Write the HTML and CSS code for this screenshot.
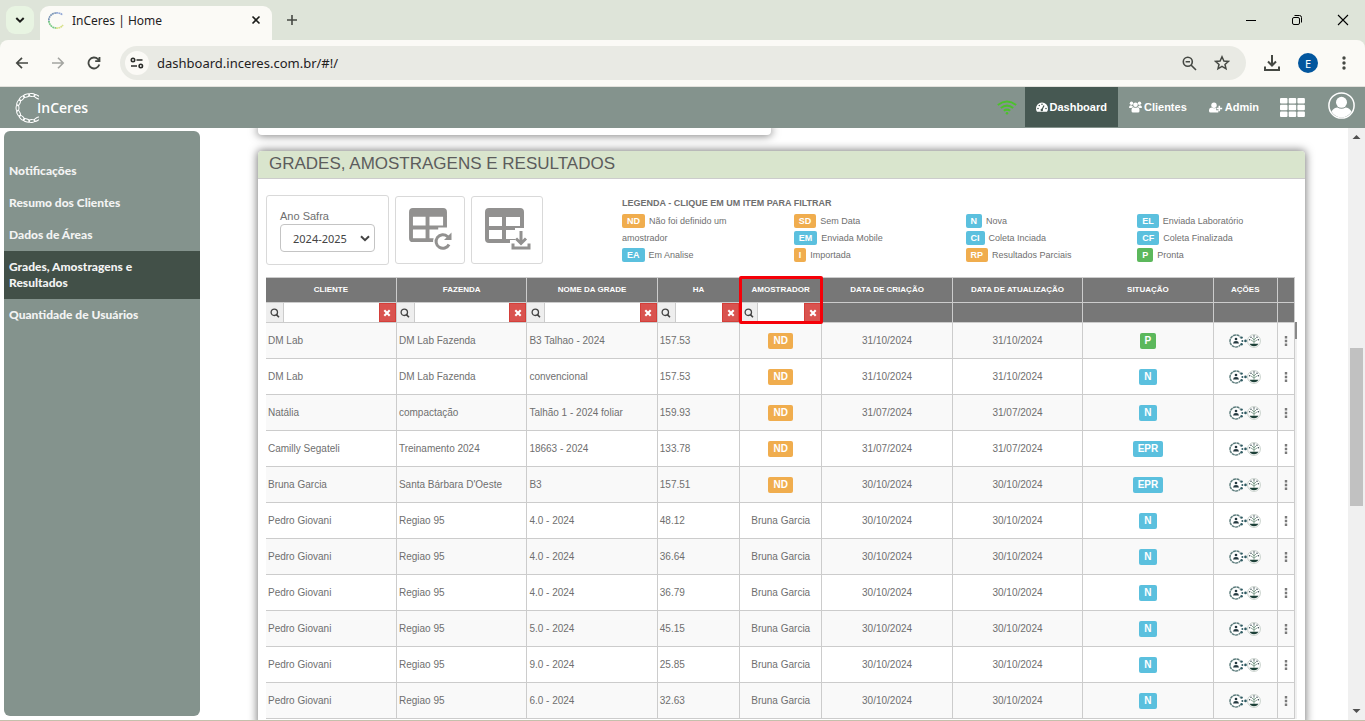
FILE: index.html
```html
<!DOCTYPE html>
<html lang="pt-BR">
<head>
<meta charset="utf-8">
<title>InCeres | Home</title>
<link rel="stylesheet" href="styles.css">
</head>
<body>
<svg class="sprite" aria-hidden="true">
  <symbol id="search" viewBox="0 0 10 10"><circle cx="4.3" cy="4.3" r="3.2" fill="none" stroke="currentColor" stroke-width="1.3"/><path d="M6.4 6.6L9 9.2" stroke="currentColor" stroke-width="1.6"/></symbol>
  <symbol id="clear" viewBox="0 0 8 8"><path d="M1.3 1.3L6.7 6.7M6.7 1.3L1.3 6.7" stroke="currentColor" stroke-width="2.1"/></symbol>
  <symbol id="share" viewBox="0 0 18 14"><circle cx="7" cy="7" r="6" fill="#fff" stroke="#5b7b7b" stroke-width="1.5" stroke-dasharray="3 .5"/><circle cx="7" cy="5" r="1.3" fill="#24383f"/><path d="M4 9.400Q4.300 7 7 7T10 9.400Z" fill="#24383f"/><path d="M11.500 1.200L17.800 7L11.500 12.800Z" fill="#fff"/><g fill="#2f5a62"><circle cx="12.600" cy="3.600" r="1.200"/><circle cx="12.600" cy="10.300" r="1.200"/><circle cx="13.400" cy="6.900" r="1"/><circle cx="16.500" cy="6.900" r="1.300"/></g></symbol>
  <symbol id="plant" viewBox="0 0 14 14"><circle cx="7" cy="7" r="6.400" fill="#fff" stroke="#b9c4bd" stroke-width=".8"/><path d="M2.500 9.800H11.500L10 11.600Q7 13 4 11.600Z" fill="#1d4038"/><path d="M7 10V3M7 8L4 6M7 8L10 6M7 6L5 4M7 6L9 4" stroke="#7f9d8c" stroke-width=".9" fill="none"/><g fill="#24383f"><circle cx="4" cy="3.200" r=".7"/><circle cx="7" cy="2" r=".7"/><circle cx="10" cy="3.200" r=".7"/><circle cx="2.700" cy="5.800" r=".7"/><circle cx="11.300" cy="5.800" r=".7"/></g></symbol>
  <symbol id="dots" viewBox="0 0 4 10"><path d="M.8 0h2.400v2.400H.8zM.8 3.800h2.400v2.400H.8zM.8 7.600h2.400V10H.8z" fill="#7a7a7a"/></symbol>
  <symbol id="grid-table" viewBox="0 0 40 36"><path fill="#929190" fill-rule="evenodd" d="M4 0H35a4 4 0 0 1 4 4V20H30V35H4a4 4 0 0 1-4-4V4a4 4 0 0 1 4-4ZM4 9V18H17V9ZM21 9V18H35V9ZM4 22V31H17V22ZM21 22V31H30V22Z"/></symbol>
  <symbol id="bead" viewBox="0 0 31 32"><ellipse cx="15.500" cy="3" rx="2.700" ry="1.600" transform="rotate(-14 15.500 3)"/></symbol>
</svg>

<div class="tabstrip">
  <button class="tab-search" aria-label="Pesquisar guias"><svg width="10" height="8" viewBox="0 0 10 8"><path d="M1.3 2L5 5.6L8.7 2" fill="none" stroke="#1b1d1a" stroke-width="2"/></svg></button>
  <div class="tab">
    <svg width="17" height="17" viewBox="0 0 17 17" fill="none" stroke-width="1.7" stroke-dasharray="1.8 .5"><path d="M8 1Q12 .5 14.5 3" stroke="#8fa5d6"/><path d="M8 1A7.3 7.3 0 0 0 1 10" stroke="#7893b5"/><path d="M1 9A7.3 7.3 0 0 0 8 16" stroke="#77c985"/><path d="M8 16Q12.500 16.500 15 13" stroke="#d5df83"/></svg>
    <span>InCeres | Home</span>
    <button class="plain" aria-label="Fechar guia"><svg width="10" height="10" viewBox="0 0 10 10"><path d="M1.5 1.500L8.500 8.500M8.500 1.500L1.500 8.500" stroke="#1b1d1a" stroke-width="1.600"/></svg></button>
  </div>
  <button class="plain new-tab" aria-label="Nova guia"><svg width="12" height="12" viewBox="0 0 12 12"><path d="M6 1V11M1 6H11" stroke="#454843" stroke-width="1.6"/></svg></button>
  <div class="window-buttons">
    <button class="plain" aria-label="Minimizar"><svg width="12" height="12" viewBox="0 0 12 12"><path d="M1 6.500H11" stroke="#000"/></svg></button>
    <button class="plain" aria-label="Restaurar"><svg width="12" height="12" viewBox="0 0 12 12" fill="none" stroke="#000"><rect x="1.500" y="3.500" width="7" height="7" rx="1.500"/><path d="M3.500 1.500H8.500a2 2 0 0 1 2 2V8.500"/></svg></button>
    <button class="plain" aria-label="Fechar"><svg width="12" height="12" viewBox="0 0 12 12"><path d="M1 1L11 11M11 1L1 11" stroke="#000" stroke-width="1.100"/></svg></button>
  </div>
</div>

<div class="toolbar">
  <div class="history">
    <button class="plain" aria-label="Voltar"><svg width="14" height="14" viewBox="0 0 14 14" fill="none" stroke="#454843" stroke-width="1.700"><path d="M13 7H2M7 1.800L1.800 7L7 12.200"/></svg></button>
    <button class="plain" aria-label="Avançar"><svg width="14" height="14" viewBox="0 0 14 14" fill="none" stroke="#a4a5a1" stroke-width="1.600"><path d="M1 7H12M7 1.800L12.200 7L7 12.200"/></svg></button>
    <button class="plain" aria-label="Recarregar"><svg width="14" height="14" viewBox="0 0 14 14" fill="none" stroke="#454843" stroke-width="1.800"><path d="M12.300 8.500A5.500 5.500 0 1 1 11 3.200L12.500 5M12.500 1V5.200H8.200"/></svg></button>
  </div>
  <div class="omnibox">
    <button class="site-info" aria-label="Informações do site"><svg width="14" height="14" viewBox="0 0 14 14" fill="none" stroke="#2b2d2a" stroke-width="1.600"><circle cx="3" cy="4" r="1.700"/><path d="M6.500 4H12.500M1 10H7"/><circle cx="10.800" cy="10" r="1.700"/></svg></button>
    <input class="address" type="text" aria-label="Endereço" value="dashboard.inceres.com.br/#!/">
    <button class="plain" aria-label="Zoom"><svg width="15" height="15" viewBox="0 0 15 15" fill="none" stroke="#454843" stroke-width="1.600"><circle cx="5.800" cy="5.800" r="4.500"/><path d="M9 9L14 14M3.600 5.800H8"/></svg></button>
    <button class="plain" aria-label="Favoritar"><svg width="16" height="16" viewBox="0 0 16 16" fill="none" stroke="#454843" stroke-width="1.500"><path d="M8 1.800L9.900 6L14.400 6.400L11 9.400L12 13.800L8 11.400L4 13.800L5 9.400L1.600 6.400L6.100 6Z"/></svg></button>
  </div>
  <div class="browser-actions">
    <button class="plain" aria-label="Downloads"><svg width="16" height="16" viewBox="0 0 16 16" fill="none" stroke="#454843" stroke-width="2"><path d="M8 0V10M4 6.500L8 10.500L12 6.500M1 11.500V15H15V11.500"/></svg></button>
    <button class="profile">E</button>
    <button class="plain" aria-label="Menu"><svg width="4" height="14" viewBox="0 0 4 14" fill="#454843"><circle cx="2" cy="2" r="1.700"/><circle cx="2" cy="7" r="1.700"/><circle cx="2" cy="12" r="1.700"/></svg></button>
  </div>
</div>

<header class="app-header">
  <a class="logo" href="#">
    <svg width="24" height="32" viewBox="0 0 24 32" fill="none" stroke="#fff" stroke-width="1">
      <g id="beads">
        <ellipse cx="15.500" cy="3" rx="3.200" ry="1.500" transform="rotate(30 15.500 16)"/>
        <ellipse cx="15.500" cy="3" rx="3.200" ry="1.500" transform="rotate(6 15.500 16)"/>
        <ellipse cx="15.500" cy="3" rx="3.200" ry="1.500" transform="rotate(-18 15.500 16)"/>
        <ellipse cx="15.500" cy="3" rx="3.200" ry="1.500" transform="rotate(-42 15.500 16)"/>
        <ellipse cx="15.500" cy="3" rx="3.200" ry="1.500" transform="rotate(-66 15.500 16)"/>
        <ellipse cx="15.500" cy="3" rx="3.200" ry="1.500" transform="rotate(-90 15.500 16)"/>
        <ellipse cx="15.500" cy="3" rx="3.200" ry="1.500" transform="rotate(-114 15.500 16)"/>
        <ellipse cx="15.500" cy="3" rx="3.200" ry="1.500" transform="rotate(-138 15.500 16)"/>
        <ellipse cx="15.500" cy="3" rx="3.200" ry="1.500" transform="rotate(-162 15.500 16)"/>
        <ellipse cx="15.500" cy="3" rx="3.200" ry="1.500" transform="rotate(-186 15.500 16)"/>
        <ellipse cx="15.500" cy="3" rx="3.200" ry="1.500" transform="rotate(-210 15.500 16)"/>
      </g>
    </svg>
    <span>InCeres</span>
  </a>
  <nav class="nav">
    <svg class="wifi" width="20" height="15" viewBox="0 0 20 15" fill="none" stroke="#4cc12c" stroke-width="2"><path d="M.8 5Q10-2 19.200 5M3.800 8Q10 3.200 16.200 8M6.800 10.800Q10 8.400 13.200 10.800"/><circle cx="10" cy="13.200" r="1.300" fill="#4cc12c" stroke="none"/></svg>
    <a class="nav-link active" href="#"><svg width="12" height="10" viewBox="0 0 12 10"><path fill="#fff" d="M6 .5a6 6 0 0 0-6 6Q0 8.500 1 9.700H11Q12 8.500 12 6.500a6 6 0 0 0-6-6"/><path d="M5.800 8L8 3.500" stroke="#465852" stroke-width="1.200"/><g fill="#465852"><circle cx="2" cy="6.500" r=".8"/><circle cx="3.300" cy="3.500" r=".8"/><circle cx="6" cy="2.200" r=".8"/><circle cx="10" cy="6.500" r=".8"/><circle cx="5.800" cy="8" r="1.200"/></g></svg>Dashboard</a>
    <a class="nav-link" href="#"><svg width="13" height="12" viewBox="0 0 13 12" fill="#fff"><circle cx="2.500" cy="2.300" r="1.700"/><circle cx="10.500" cy="2.300" r="1.700"/><circle cx="6.500" cy="3.800" r="2.300"/><path d="M0 6.800Q0 4 2 4.200L4 5.200Q3.500 6.200 2.500 7H.5zM13 6.800Q13 4 11 4.200L9 5.200Q9.500 6.200 10.500 7H12.500zM2.500 10Q2.300 6.500 4.500 6.300Q6.500 7.300 8.500 6.300Q10.700 6.500 10.500 10Q10.500 11.500 9 11.500H4Q2.500 11.500 2.500 10"/></svg>Clientes</a>
    <a class="nav-link" href="#"><svg width="14" height="11" viewBox="0 0 14 11" fill="#fff"><circle cx="5" cy="3.200" r="2.700"/><path d="M0 9Q-.2 5.500 2.500 5.600Q5 7 7.200 5.700V8.300H9.300V10.500H1.500Q0 10.500 0 9M9.500 3.800h1.600v1.900h2.100v1.600H11.100V9.200H9.500V7.300H7.800V5.700h1.700z"/></svg>Admin</a>
    <button class="plain apps" aria-label="Aplicativos"><svg width="25" height="19" viewBox="0 0 25 19" fill="#fff"><rect width="7.500" height="5.500" rx="1"/><rect x="8.700" width="7.500" height="5.500" rx="1"/><rect x="17.400" width="7.500" height="5.500" rx="1"/><rect y="6.700" width="7.500" height="5.500" rx="1"/><rect x="8.700" y="6.700" width="7.500" height="5.500" rx="1"/><rect x="17.400" y="6.700" width="7.500" height="5.500" rx="1"/><rect y="13.400" width="7.500" height="5.500" rx="1"/><rect x="8.700" y="13.400" width="7.500" height="5.500" rx="1"/><rect x="17.400" y="13.400" width="7.500" height="5.500" rx="1"/></svg></button>
    <button class="plain account" aria-label="Conta"><svg width="27" height="27" viewBox="0 0 27 27"><circle cx="13.500" cy="13.500" r="12.600" fill="none" stroke="#fff" stroke-width="1.500"/><circle cx="13.500" cy="10.300" r="5.500" fill="#fff"/><path d="M3.500 19.500Q6 15.500 9.500 15.500Q13.500 18 17.500 15.500Q21 15.500 23.500 19.500A11.500 11.500 0 0 1 3.500 19.500" fill="#fff"/></svg></button>
  </nav>
</header>

<div class="page">
  <nav class="sidebar">
    <a href="#">Notificações</a>
    <a href="#">Resumo dos Clientes</a>
    <a href="#">Dados de Áreas</a>
    <a class="active" href="#">Grades, Amostragens e Resultados</a>
    <a href="#">Quantidade de Usuários</a>
  </nav>
  <main class="content">
    <section class="card previous"></section>
    <section class="card">
      <h1>GRADES, AMOSTRAGENS E RESULTADOS</h1>
      <div class="card-body">
        <div class="controls">
          <div class="season">
            <label for="safra">Ano Safra</label>
            <span class="select-box"><select id="safra"><option>2024-2025</option></select><svg width="10" height="7" viewBox="0 0 10 7"><path d="M1 1.200L5 5.200L9 1.200" fill="none" stroke="#444" stroke-width="2"/></svg></span>
          </div>
          <button class="tool" aria-label="Atualizar tabela"><svg width="44" height="44" viewBox="0 0 44 44"><use href="#grid-table" width="39" height="35"/><circle cx="34" cy="33" r="10" fill="#fff"/><path d="M40 36.500A6.800 6.800 0 1 1 38.500 28.500L40 30" fill="none" stroke="#929190" stroke-width="3"/><path d="M42.500 24.500V32H35Z" fill="#929190"/></svg></button>
          <button class="tool wide" aria-label="Baixar tabela"><svg width="46" height="44" viewBox="0 0 46 44"><use href="#grid-table" width="40" height="36"/><path d="M30 20H46V44H25V32H30Z" fill="#fff"/><path d="M36 23V35M31 30.500L36 35.500L41 30.500M28 35.500V40H44V35.500" fill="none" stroke="#929190" stroke-width="3"/></svg></button>
          <div class="legend">
            <h2>LEGENDA - CLIQUE EM UM ITEM PARA FILTRAR</h2>
            <div class="legend-grid">
              <div><p><b class="tag orange">ND</b>Não foi definido um<br>amostrador</p><p><b class="tag blue">EA</b>Em Analise</p></div>
              <div><p><b class="tag orange">SD</b>Sem Data</p><p><b class="tag blue">EM</b>Enviada Mobile</p><p><b class="tag orange">I</b>Importada</p></div>
              <div><p><b class="tag blue">N</b>Nova</p><p><b class="tag blue">CI</b>Coleta Inciada</p><p><b class="tag orange">RP</b>Resultados Parciais</p></div>
              <div><p><b class="tag blue">EL</b>Enviada Laboratório</p><p><b class="tag blue">CF</b>Coleta Finalizada</p><p><b class="tag green">P</b>Pronta</p></div>
            </div>
          </div>
        </div>
        <div class="table-area">
        <table>
          <colgroup><col class="c-wide"><col class="c-wide"><col class="c-wide"><col class="c-mid"><col class="c-mid"><col class="c-wide"><col class="c-wide"><col class="c-wide"><col class="c-small"><col class="c-tiny"></colgroup>
          <thead>
            <tr class="titles"><th>CLIENTE</th><th>FAZENDA</th><th>NOME DA GRADE</th><th>HA</th><th class="marked">AMOSTRADOR</th><th>DATA DE CRIAÇÃO</th><th>DATA DE ATUALIZAÇÃO</th><th>SITUAÇÃO</th><th>AÇÕES</th><th></th></tr>
            <tr class="filters">
              <td><div class="filter"><button aria-label="Buscar"><svg><use href="#search"/></svg></button><input type="text" aria-label="Cliente"><button class="clear" aria-label="Limpar"><svg><use href="#clear"/></svg></button></div></td>
              <td><div class="filter"><button aria-label="Buscar"><svg><use href="#search"/></svg></button><input type="text" aria-label="Fazenda"><button class="clear" aria-label="Limpar"><svg><use href="#clear"/></svg></button></div></td>
              <td><div class="filter"><button aria-label="Buscar"><svg><use href="#search"/></svg></button><input type="text" aria-label="Nome da grade"><button class="clear" aria-label="Limpar"><svg><use href="#clear"/></svg></button></div></td>
              <td><div class="filter"><button aria-label="Buscar"><svg><use href="#search"/></svg></button><input type="text" aria-label="HA"><button class="clear" aria-label="Limpar"><svg><use href="#clear"/></svg></button></div></td>
              <td><div class="filter"><button aria-label="Buscar"><svg><use href="#search"/></svg></button><input type="text" aria-label="Amostrador"><button class="clear" aria-label="Limpar"><svg><use href="#clear"/></svg></button></div></td>
              <td></td><td></td><td></td><td></td><td></td>
            </tr>
          </thead>
          <tbody>
            <tr><td>DM Lab</td><td>DM Lab Fazenda</td><td>B3 Talhao - 2024</td><td>157.53</td><td><b class="badge orange">ND</b></td><td>31/10/2024</td><td>31/10/2024</td><td><b class="badge green">P</b></td><td><svg class="share"><use href="#share"/></svg><svg class="plant"><use href="#plant"/></svg></td><td><svg class="dots"><use href="#dots"/></svg></td></tr>
            <tr><td>DM Lab</td><td>DM Lab Fazenda</td><td>convencional</td><td>157.53</td><td><b class="badge orange">ND</b></td><td>31/10/2024</td><td>31/10/2024</td><td><b class="badge blue">N</b></td><td><svg class="share"><use href="#share"/></svg><svg class="plant"><use href="#plant"/></svg></td><td><svg class="dots"><use href="#dots"/></svg></td></tr>
            <tr><td>Natália</td><td>compactação</td><td>Talhão 1 - 2024 foliar</td><td>159.93</td><td><b class="badge orange">ND</b></td><td>31/07/2024</td><td>31/07/2024</td><td><b class="badge blue">N</b></td><td><svg class="share"><use href="#share"/></svg><svg class="plant"><use href="#plant"/></svg></td><td><svg class="dots"><use href="#dots"/></svg></td></tr>
            <tr><td>Camilly Segateli</td><td>Treinamento 2024</td><td>18663 - 2024</td><td>133.78</td><td><b class="badge orange">ND</b></td><td>31/07/2024</td><td>31/07/2024</td><td><b class="badge blue">EPR</b></td><td><svg class="share"><use href="#share"/></svg><svg class="plant"><use href="#plant"/></svg></td><td><svg class="dots"><use href="#dots"/></svg></td></tr>
            <tr><td>Bruna Garcia</td><td>Santa Bárbara D'Oeste</td><td>B3</td><td>157.51</td><td><b class="badge orange">ND</b></td><td>30/10/2024</td><td>30/10/2024</td><td><b class="badge blue">EPR</b></td><td><svg class="share"><use href="#share"/></svg><svg class="plant"><use href="#plant"/></svg></td><td><svg class="dots"><use href="#dots"/></svg></td></tr>
            <tr><td>Pedro Giovani</td><td>Regiao 95</td><td>4.0 - 2024</td><td>48.12</td><td>Bruna Garcia</td><td>30/10/2024</td><td>30/10/2024</td><td><b class="badge blue">N</b></td><td><svg class="share"><use href="#share"/></svg><svg class="plant"><use href="#plant"/></svg></td><td><svg class="dots"><use href="#dots"/></svg></td></tr>
            <tr><td>Pedro Giovani</td><td>Regiao 95</td><td>4.0 - 2024</td><td>36.64</td><td>Bruna Garcia</td><td>30/10/2024</td><td>30/10/2024</td><td><b class="badge blue">N</b></td><td><svg class="share"><use href="#share"/></svg><svg class="plant"><use href="#plant"/></svg></td><td><svg class="dots"><use href="#dots"/></svg></td></tr>
            <tr><td>Pedro Giovani</td><td>Regiao 95</td><td>4.0 - 2024</td><td>36.79</td><td>Bruna Garcia</td><td>30/10/2024</td><td>30/10/2024</td><td><b class="badge blue">N</b></td><td><svg class="share"><use href="#share"/></svg><svg class="plant"><use href="#plant"/></svg></td><td><svg class="dots"><use href="#dots"/></svg></td></tr>
            <tr><td>Pedro Giovani</td><td>Regiao 95</td><td>5.0 - 2024</td><td>45.15</td><td>Bruna Garcia</td><td>30/10/2024</td><td>30/10/2024</td><td><b class="badge blue">N</b></td><td><svg class="share"><use href="#share"/></svg><svg class="plant"><use href="#plant"/></svg></td><td><svg class="dots"><use href="#dots"/></svg></td></tr>
            <tr><td>Pedro Giovani</td><td>Regiao 95</td><td>9.0 - 2024</td><td>25.85</td><td>Bruna Garcia</td><td>30/10/2024</td><td>30/10/2024</td><td><b class="badge blue">N</b></td><td><svg class="share"><use href="#share"/></svg><svg class="plant"><use href="#plant"/></svg></td><td><svg class="dots"><use href="#dots"/></svg></td></tr>
            <tr><td>Pedro Giovani</td><td>Regiao 95</td><td>6.0 - 2024</td><td>32.63</td><td>Bruna Garcia</td><td>30/10/2024</td><td>30/10/2024</td><td><b class="badge blue">N</b></td><td><svg class="share"><use href="#share"/></svg><svg class="plant"><use href="#plant"/></svg></td><td><svg class="dots"><use href="#dots"/></svg></td></tr>
          </tbody>
        </table>
        <div class="table-scroll"><div></div></div>
        </div>
      </div>
    </section>
  </main>
  <div class="scrollbar">
    <svg width="9" height="5" viewBox="0 0 9 5"><path d="M.5 5L4.500 1L8.500 5Z" fill="#505050"/></svg>
    <div class="thumb"></div>
    <svg width="9" height="5" viewBox="0 0 9 5"><path d="M.5 0L4.500 4L8.500 0Z" fill="#505050"/></svg>
  </div>
</div>
</body>
</html>
```

FILE: styles.css
```css
*, *::after { box-sizing: border-box; }

body {
  margin: 0;
  height: 100vh;
  display: flex;
  flex-direction: column;
  overflow: hidden;
  background: #dee4d9;
  border-bottom: 1px solid #c4c0ac;
  font-family: "Liberation Sans", Arial, sans-serif;
  font-size: 10px;
  color: #6f6f6f;
}

svg { display: block; flex: none; }
.sprite { position: absolute; width: 0; height: 0; }
button, input, select { font: inherit; color: inherit; }
a { color: inherit; text-decoration: none; }
.plain { border: 0; padding: 0; background: none; }

/* Browser frame */
.tabstrip {
  flex: none;
  height: 40px;
  display: flex;
  align-items: center;
  padding-left: 6px;
  font-family: "Noto Sans", sans-serif;
}
.tab-search {
  width: 28px;
  height: 28px;
  display: grid;
  place-items: center;
  border: 0;
  border-radius: 9px;
  background: #e8f4e2;
}
.tab {
  align-self: flex-end;
  width: 232px;
  height: 34px;
  margin-left: 6px;
  padding: 0 11px 6px 8px;
  display: flex;
  align-items: center;
  gap: 7px;
  border-radius: 9px 9px 0 0;
  background: #fbfaf6;
  font-size: 12px;
  color: #1f211e;
}
.tab span { flex: 1; }
.new-tab { margin-left: 14px; }
.window-buttons {
  margin-left: auto;
  padding-right: 16px;
  display: flex;
  gap: 34px;
}
.toolbar {
  flex: none;
  height: 47px;
  display: flex;
  align-items: center;
  padding: 0 19px 0 15px;
  background: #fbfaf6;
  border-bottom: 1px solid #e2e1dc;
  border-radius: 8px 8px 0 0;
  font-family: "Noto Sans", sans-serif;
}
.history { display: flex; gap: 22px; }
.omnibox {
  flex: 1;
  height: 34px;
  margin-left: 19px;
  padding: 0 16px 0 5px;
  display: flex;
  align-items: center;
  gap: 17px;
  border-radius: 17px;
  background: #e9eae4;
}
.site-info {
  width: 24px;
  height: 24px;
  display: grid;
  place-items: center;
  padding: 0;
  border: 0;
  border-radius: 12px;
  background: #fbfaf6;
}
.address {
  flex: 1;
  min-width: 0;
  margin-left: -9px;
  padding: 0;
  border: 0;
  background: none;
  font-size: 13px;
  color: #1f211e;
}
.browser-actions {
  display: flex;
  align-items: center;
  gap: 18px;
  margin-left: 18px;
}
.profile {
  width: 20px;
  height: 20px;
  padding: 0;
  border: 0;
  border-radius: 10px;
  background: #02569e;
  color: #fff;
  font-size: 11px;
}
.browser-actions .plain:last-child { margin-left: 6px; }

/* Application header */
.app-header {
  flex: none;
  height: 41px;
  display: flex;
  justify-content: space-between;
  padding-left: 15px;
  background: #84938d;
  color: #fff;
}
.logo { display: flex; align-items: center; font-family: "Open Sans", sans-serif; font-size: 14px; font-weight: 600; }
.logo span { margin-left: -2px; }
.nav { display: flex; align-items: center; padding-right: 10px; font-size: 11px; font-weight: bold; }
.wifi { margin-right: 8px; }
.nav-link {
  height: 40px;
  align-self: flex-start;
  display: flex;
  align-items: center;
  gap: 2px;
  padding: 0 11px;
}
.nav-link.active { background: #465852; }
.apps { margin: 0 23px 0 10px; }
.account { align-self: flex-start; margin-top: 5px; }

/* Page */
.page { flex: 1; min-height: 0; display: flex; background: #fff; }
.sidebar {
  flex: none;
  width: 196px;
  margin: 3px 0 4px 4px;
  padding-top: 24px;
  border-radius: 6px;
  background: #84938d;
  color: #f3f3f3;
  font-family: Lato, sans-serif;
  font-size: 12px;
  font-weight: 900;
  line-height: 16px;
}
.sidebar a { display: block; padding: 8px 40px 8px 5px; }
.sidebar .active { background: #425048; }

.content { flex: 1; min-width: 0; padding: 0 43px 0 58px; overflow: hidden; }
.card { border-radius: 4px; background: #fff; box-shadow: 0 0 8px 1px rgba(0, 0, 0, .5); }
.card.previous { width: 49%; height: 7px; margin-bottom: 16px; border-radius: 0 0 4px 4px; }
h1 {
  margin: 0;
  padding: 0 11px;
  height: 28px;
  border-bottom: 1px solid #ccc;
  border-radius: 4px 4px 0 0;
  background: #d9e5cd;
  font-size: 17px;
  font-weight: normal;
  line-height: 25px;
  color: #5c5c5c;
}
.card-body { padding: 16px 8px 8px; }
.controls { display: flex; align-items: flex-start; gap: 6px; height: 82px; }
.season {
  width: 123px;
  height: 70px;
  padding: 13px 13px;
  border: 1px solid #d9d9d9;
  border-radius: 3px;
  font-size: 11px;
  line-height: 15px;
}
.select-box {
  display: grid;
  align-items: center;
  height: 28px;
  border: 1px solid #c4c4c4;
  border-radius: 4px;
  font-family: "Noto Sans", sans-serif;
  color: #444;
}
.select-box > * { grid-area: 1 / 1; }
.select-box select { appearance: none; height: 26px; padding: 0 12px; border: 0; background: none; }
.select-box svg { justify-self: end; margin-right: 4px; pointer-events: none; }
.tool {
  width: 70px;
  height: 68px;
  margin-top: 1px;
  padding: 0 0 0 13px;
  border: 1px solid #d9d9d9;
  border-radius: 3px;
  background: #fff;
}
.tool.wide { width: 72px; }
.legend { flex: 1; margin: 2px -12px 0 73px; font-size: 9px; line-height: 17px; }
h2 { margin: 0; font-size: 9px; line-height: 12px; padding-bottom: 4px; }
.legend-grid { display: grid; grid-template-columns: repeat(4, 1fr); }
.legend p { margin: 0; }
.tag {
  display: inline-block;
  margin-right: 4px;
  padding: 0 5px;
  border-radius: 2px;
  color: #fff;
  font-size: 9px;
  line-height: 14px;
}
.orange { background: #f0ad4e; }
.blue { background: #5bc0de; }
.green { background: #5cb85c; }

/* Results table */
.table-area { display: flex; }
table { flex: 1; width: 100%; table-layout: fixed; border-collapse: collapse; }
.c-wide { width: 130px; }
.c-mid { width: 82px; }
.c-small { width: 64px; }
.c-tiny { width: 17px; }
th, td { padding: 0; border: 1px solid #ccc; text-align: center; }
th:first-child, td:first-child { border-left: 0; }
thead { background: #777; color: #fff; font-size: 8px; }
.titles { height: 25px; }
.titles th { padding-bottom: 2px; }
.filters { height: 20px; }
.marked { position: relative; }
.marked::after {
  content: "";
  position: absolute;
  inset: -2px -2px auto -1px;
  height: 48px;
  border: 3px solid #f50008;
  border-radius: 2px;
}
.filter { display: flex; height: 19px; }
.filter button {
  flex: none;
  width: 17px;
  display: grid;
  place-items: center;
  padding: 0;
  border: 0;
  background: #eee;
  color: #444;
}
.filter svg { width: 10px; height: 10px; }
.filter input { flex: 1; min-width: 0; padding: 0 3px; border: 0; border-left: 1px solid #ccc; background: #fff; color: #444; }
.filter .clear { border: 1px solid #d43f3a; background: #d9534f; color: #fff; }
.filter .clear svg { width: 8px; height: 8px; }
tbody tr { height: 36px; }
tbody tr:nth-child(odd) { background: #f9f9f9; }
tbody td:nth-child(-n+4) { padding-left: 2px; text-align: left; }
.badge {
  display: inline-block;
  padding: 0 5px;
  border-radius: 2px;
  color: #fff;
  line-height: 16px;
}
.share, .plant { display: inline-block; vertical-align: middle; height: 14px; }
.share { width: 18px; }
.plant { width: 14px; }
.dots { width: 4px; height: 10px; margin: 0 auto; }
.table-scroll { flex: none; width: 2px; margin-top: 45px; background: #f0f0f0; }
.table-scroll div { height: 17px; background: #888; }

.scrollbar {
  flex: none;
  width: 17px;
  padding: 6px 0;
  display: flex;
  flex-direction: column;
  align-items: center;
  background: #f0f0f0;
}
.thumb { width: 13px; height: 158px; margin: 209px 0 auto; background: #c1c1c1; }
```
